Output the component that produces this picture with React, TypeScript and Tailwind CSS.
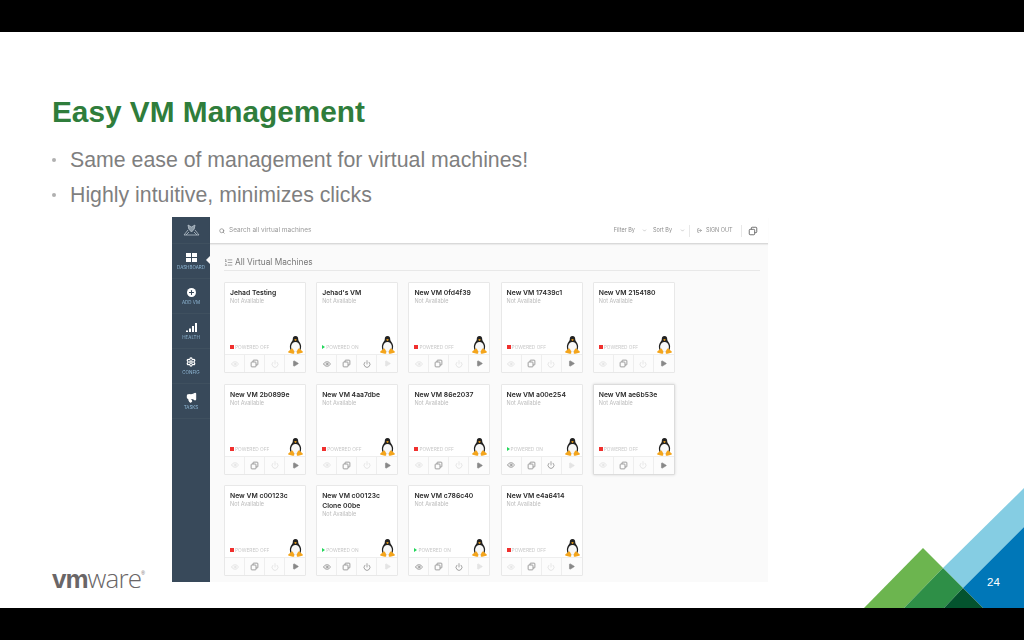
import { Eye, Power, Play, Search, Plus, Settings, Megaphone, LogOut, ChevronDown, ListOrdered } from "lucide-react";

type VM = { name: string; on?: boolean; hi?: boolean };
const vms: VM[] = [
  { name: "Jehad Testing" },
  { name: "Jehad's VM", on: true },
  { name: "New VM 0fd4f39" },
  { name: "New VM 17439c1" },
  { name: "New VM 2154180" },
  { name: "New VM 2b0899e" },
  { name: "New VM 4aa7dbe" },
  { name: "New VM 86e2037" },
  { name: "New VM a00e254", on: true },
  { name: "New VM ae6b53e", hi: true },
  { name: "New VM c00123c" },
  { name: "New VM c00123c Clone 00be", on: true },
  { name: "New VM c786c40", on: true },
  { name: "New VM e4a6414" },
];

function Tux() {
  return (
    <svg width="15" height="18" viewBox="0 0 15 18">
      <path d="M7.500 0C5.400 0 4.700 1.500 4.800 3.300 4.900 5 2.600 6.500 2 9.200 1.600 11.300 2.200 13.500 3.200 15.500h8.600c1-2 1.600-4.200 1.200-6.300C12.400 6.500 10.100 5 10.200 3.300 10.300 1.500 9.600 0 7.500 0z" fill="#222" />
      <ellipse cx="7.500" cy="11" rx="4.400" ry="5" fill="#f8f8f8" />
      <path d="M6 3.700 7.500 3 9 3.700 7.500 5z" fill="#f0a01a" />
      <path d="M3.800 12.500.3 15.500c-.4.500 0 1 .5 1.200l4 1c.9.200 1.500-.2 1.500-1 0-1.700-1-3.700-2.500-4.700z" fill="#f4a51c" />
      <path d="M11.200 12.500l3.500 3c.4.500 0 1-.5 1.200l-4 1c-.9.200-1.500-.2-1.500-1 0-1.700 1-3.700 2.500-4.700z" fill="#f4a51c" />
    </svg>
  );
}

function Clone({ className }: { className: string }) {
  return (
    <svg viewBox="0 0 12 12" width="9" height="9" fill="none" stroke="currentColor" strokeWidth="1.100" className={className}>
      <path d="M4 4V2.500a1 1 0 0 1 1-1h4.500a1 1 0 0 1 1 1V7a1 1 0 0 1-1 1H8" />
      <path d="M2.500 4H7a1 1 0 0 1 1 1v4.500a1 1 0 0 1-1 1H2.500a1 1 0 0 1-1-1V5a1 1 0 0 1 1-1z" />
    </svg>
  );
}

function Card({ vm }: { vm: VM }) {
  const faint = "text-[#dcdcdc]";
  const dark = "text-[#7a7a7a]";
  return (
    <div className={`flex h-[91px] flex-col rounded-[1px] border bg-white ${vm.hi ? "border-[#dcdcdc] shadow-[0_0_3px_rgba(0,0,0,0.15)]" : "border-[#e8e8e8]"}`}>
      <div className="relative flex-1 px-[5px] pt-[5px]">
        <div className="text-[6.800px] leading-[10px] font-semibold text-[#2a2a2a]">{vm.name}</div>
        <div className="text-[5.500px] leading-[7px] text-[#bbb]">Not Available</div>
        <div className="absolute bottom-[4px] left-[5px] flex items-center gap-[1px] text-[4.800px] leading-[6px] text-[#c8c8c8]">
          {vm.on ? (
            <span className="h-0 w-0 border-y-[2px] border-l-[3px] border-y-transparent border-l-[#22d65a]" />
          ) : (
            <span className="h-[4px] w-[4px] bg-[#f0302e]" />
          )}
          <span>{vm.on ? "POWERED ON" : "POWERED OFF"}</span>
        </div>
        <div className="absolute right-[2px] bottom-0">
          <Tux />
        </div>
      </div>
      <div className="grid h-[18px] grid-cols-4 divide-x divide-[#eeeeee] border-t border-[#eeeeee] bg-[#fcfcfc]">
        <div className="flex items-center justify-center">
          <Eye size={8} className={vm.on ? dark : faint} />
        </div>
        <div className="flex items-center justify-center">
          <Clone className="text-[#8a8a8a]" />
        </div>
        <div className="flex items-center justify-center">
          <Power size={8} className={vm.on ? dark : faint} />
        </div>
        <div className="flex items-center justify-center">
          <Play size={7} className={vm.on ? "fill-[#e4e4e4] text-[#e4e4e4]" : "fill-[#888] text-[#888]"} />
        </div>
      </div>
    </div>
  );
}

function NavItem({ label, active, children }: { label: string; active?: boolean; children: React.ReactNode }) {
  return (
    <div className="relative flex h-[35px] flex-col items-center justify-center gap-[2px] border-b border-[#3f505f]">
      <div className="flex h-[11px] items-center justify-center text-white">{children}</div>
      <span className="text-[4.500px] leading-[6px] text-[#8fb8d6]">{label}</span>
      {active && (
        <span className="absolute top-[12px] right-0 h-0 w-0 border-y-[4px] border-r-[4px] border-y-transparent border-r-[#fafafa]" />
      )}
    </div>
  );
}

function Sidebar() {
  return (
    <aside className="flex w-[38px] flex-col bg-[#38495a]">
      <div className="flex h-[27px] items-center justify-center border-b border-[#3f505f]">
        <svg width="17" height="12" viewBox="0 0 17 12" fill="none" stroke="#b6c2cb" strokeWidth="0.800">
          <path d="M5 1l3.500 2L12 1l-.8 4-2.700 3-2.700-3z" fill="#8a99a5" />
          <path d="M1 11l4-5M16 11l-4-5M3 11l3-3M14 11l-3-3M1 11h15" />
        </svg>
      </div>
      <NavItem label="DASHBOARD" active>
        <div className="grid grid-cols-2 gap-[1px]">
          <span className="h-[4px] w-[5px] bg-white" />
          <span className="h-[4px] w-[5px] bg-white" />
          <span className="h-[4px] w-[5px] bg-white" />
          <span className="h-[4px] w-[5px] bg-white" />
        </div>
      </NavItem>
      <NavItem label="ADD VM">
        <span className="flex h-[9px] w-[9px] items-center justify-center rounded-full bg-white">
          <Plus size={7} strokeWidth={3.500} className="text-[#38495a]" />
        </span>
      </NavItem>
      <NavItem label="HEALTH">
        <svg width="11" height="9" viewBox="0 0 11 9" fill="#fff">
          <path d="M0 7.500h2V9H0zM3 5.500h2V9H3zM6 3h2v6H6zM9 0h2v9H9z" />
        </svg>
      </NavItem>
      <NavItem label="CONFIG">
        <Settings size={10} strokeWidth={3} className="text-white" />
      </NavItem>
      <NavItem label="TASKS">
        <Megaphone size={11} strokeWidth={2.500} className="fill-white text-white" />
      </NavItem>
    </aside>
  );
}

function TopBar() {
  return (
    <header className="flex h-[27px] items-center border-b border-[#d9d9d9] bg-white pt-[1px] pr-[10px] pl-[9px] text-[5.500px] whitespace-nowrap text-[#8d8d8d] shadow-[0_1px_1px_rgba(0,0,0,0.06)]">
      <Search size={6} strokeWidth={2.500} className="text-[#777]" />
      <span className="ml-[4px] text-[6.500px] text-[#999]">Search all virtual machines</span>
      <div className="ml-auto flex items-center">
        <span>Filter By</span>
        <ChevronDown size={5} className="mr-[6px] ml-[7px]" />
        <span>Sort By</span>
        <ChevronDown size={5} className="mr-[4px] ml-[8px]" />
        <span className="h-[12px] w-px bg-[#e8e8e8]" />
        <LogOut size={5} strokeWidth={3} className="ml-[7px] text-[#888]" />
        <span className="ml-[4px] w-[27px]">SIGN OUT</span>
        <span className="ml-[8px] h-[12px] w-px bg-[#e8e8e8]" />
        <Clone className="ml-[6px] h-[10px] w-[10px] text-[#666]" />
      </div>
    </header>
  );
}

function AppShot() {
  return (
    <div className="flex h-[365px] w-[596px] bg-[#fafafa] font-['Inter',sans-serif] blur-[0.5px]">
      <Sidebar />
      <div className="flex flex-1 flex-col">
        <TopBar />
        <div className="flex-1 pt-[13px] pr-[8px] pl-[14px]">
          <div className="flex h-[14px] items-center gap-[2px] border-b border-[#e8e8e8] pb-[2px] text-[8.300px] text-[#777]">
            <ListOrdered size={9} className="text-[#888]" />
            <span>All Virtual Machines</span>
          </div>
          <div className="mt-[11px] grid grid-cols-[repeat(5,82px)] gap-x-[10.200px] gap-y-[10.500px]">
            {vms.map((vm, i) => (
              <Card key={i} vm={vm} />
            ))}
          </div>
        </div>
      </div>
    </div>
  );
}

export default function App() {
  return (
    <div className="flex h-[640px] w-[1024px] flex-col overflow-hidden bg-black font-['Liberation_Sans',Arial,sans-serif]">
      <div className="h-8 shrink-0" />
      <main className="relative flex-1 bg-white pt-[62px] pl-[52px]">
        <h1 className="text-[29.800px] leading-[36px] font-bold text-[#2f7d3b]">Easy VM Management</h1>
        <ul className="mt-[18px] flex flex-col gap-[11px] text-[21.300px] leading-[24px] text-[#7f7f7f]">
          <li className="flex items-center">
            <span className="mr-[14px] h-[4px] w-[4px] rounded-full bg-[#b0b0b0]" />
            Same ease of management for virtual machines!
          </li>
          <li className="flex items-center">
            <span className="mr-[14px] h-[4px] w-[4px] rounded-full bg-[#b0b0b0]" />
            Highly intuitive, minimizes clicks
          </li>
        </ul>
        <div className="mt-[10px] flex items-end">
          <div className="mb-[-9px] flex w-[120px] items-start text-[#6a6667]">
            <span className="text-[26px] leading-[24px] font-bold tracking-[-1px]">vm</span>
            <span className="font-['Open_Sans',sans-serif] text-[26px] leading-[22px] font-light tracking-[-0.800px]">ware</span>
            <span className="text-[5px] leading-[12px]">®</span>
          </div>
          <AppShot />
        </div>
        <svg className="absolute right-0 bottom-0" width="164" height="125" viewBox="860 483 164 125">
          <path d="M1024 488 943 568l20 20 61-61z" fill="#85cde3" />
          <path d="M1024 527l-61 61 20 20h41z" fill="#0077b8" />
          <path d="M923 548l-59 60h40l39-40z" fill="#6cb54f" />
          <path d="M943 568l-39 40h40l19-20z" fill="#2e8f47" />
          <path d="M963 588l-19 20h39z" fill="#04532e" />
        </svg>
        <span className="absolute top-[543px] left-[987px] text-[11.500px] leading-[14px] text-white">24</span>
      </main>
      <div className="h-8 shrink-0" />
    </div>
  );
}
